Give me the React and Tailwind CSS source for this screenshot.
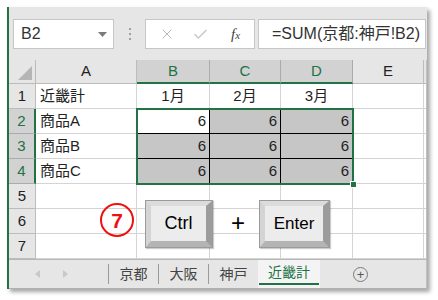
import React from 'react';
import { X, Check } from 'lucide-react';

const COLS = ['A', 'B', 'C', 'D', 'E'];
const COL_W = ['w-[101px]', 'w-[73px]', 'w-[71px]', 'w-[72px]', 'w-[71px]'];

// row data: [A, B, C, D]
const ROWS = [
  ['近畿計', '1月', '2月', '3月'],
  ['商品A', '6', '6', '6'],
  ['商品B', '6', '6', '6'],
  ['商品C', '6', '6', '6'],
  ['', '', '', ''],
  ['', '', '', ''],
  ['', '', '', ''],
];

const font = { fontFamily: '"Liberation Sans", "Noto Sans CJK JP", sans-serif' };

const Cell = ({ r, c, value }) => {
  const inSel = r >= 1 && r <= 3 && c >= 1 && c <= 3;
  const active = r === 1 && c === 1;
  let cls = 'h-[25px] shrink-0 flex items-center text-[15px] text-[#222] border-r border-b ';
  cls += COL_W[c] + ' ';
  if (inSel) {
    cls += active ? 'bg-white ' : 'bg-[#c6c6c6] ';
    cls += 'border-black ';
  } else {
    cls += 'bg-white border-[#d4d4d4] ';
  }
  if (r === 0 && c >= 1 && c <= 3) cls += 'justify-center border-b-black ';
  else if (c === 0) cls += 'pl-[4px] ';
  else cls += 'justify-end pr-[3px] ';
  if (c === 0 && r >= 1 && r <= 3) cls += 'border-r-[#d4d4d4] ';
  return <div className={cls}>{value}</div>;
};

const Key = ({ label, w, size }) => (
  <div className={`${w} h-[48px] border border-[#9a9a9a] bg-[#a8a8a8] shadow-[1px_1px_1px_rgba(0,0,0,0.2)]`}>
    <div className="w-full h-full border-t-[5px] border-l-[5px] border-r-[6px] border-b-[6px] border-t-[#dcdcdc] border-l-[#d4d4d4] border-r-[#9c9c9c] border-b-[#b4b4b4] bg-[#ececec] flex items-center justify-center">
      <span className={`${size} text-black`} style={font}>{label}</span>
    </div>
  </div>
);

export default function App() {
  return (
    <div className="w-[438px] h-[300px] bg-white pt-[7px] pl-[7px]" style={font}>
      <div className="relative w-[420px] h-[282px] bg-[#e6e6e6] border-l-2 border-[#217346] shadow-[3px_3px_4px_rgba(0,0,0,0.35)] flex flex-col">
        {/* formula bar */}
        <div className="h-[53px] flex items-start pt-[12px] pl-[4px]">
          <div className="w-[101px] h-[30px] bg-white border border-[#c6c6c6] flex items-center justify-between pl-[7px] pr-[6px]">
            <span className="text-[16px] text-[#333]">B2</span>
            <svg width="9" height="5" viewBox="0 0 9 5"><path d="M0 0h9L4.5 5z" fill="#7a7a7a" /></svg>
          </div>
          <div className="w-[31px] h-[30px] flex flex-col items-center justify-center gap-[3px]">
            <div className="w-[2px] h-[2px] bg-[#a0a0a0]" />
            <div className="w-[2px] h-[2px] bg-[#a0a0a0]" />
            <div className="w-[2px] h-[2px] bg-[#a0a0a0]" />
          </div>
          <div className="w-[110px] h-[30px] bg-white border border-[#c6c6c6] flex items-center pl-[13px]">
            <X size={16} strokeWidth={1.4} color="#b4b4b4" />
            <Check size={17} strokeWidth={2} color="#c8c8c8" className="ml-[17px]" />
            <span className="ml-[22px] text-[15px] italic text-[#444]" style={{ fontFamily: '"Liberation Serif", serif' }}>f<span className="text-[11px]">x</span></span>
          </div>
          <div className="ml-[3px] w-[168px] h-[30px] bg-white border border-[#c6c6c6] flex items-center pl-[13px]">
            <span className="text-[16px] text-[#333]">=SUM(京都:神戸!B2)</span>
          </div>
        </div>

        {/* grid */}
        <div className="relative h-[199px] flex flex-col bg-white border-r border-[#c0c0c0]">
          <div className="flex h-[24px]">
            <div className="w-[27px] shrink-0 bg-[#e6e6e6] border-r border-b border-[#bcbcbc] flex items-end justify-end p-[3px]">
              <svg width="14" height="14" viewBox="0 0 14 14"><path d="M14 0V14H0z" fill="#b5b5b5" /></svg>
            </div>
            {COLS.map((c, i) => {
              const sel = i >= 1 && i <= 3;
              return (
                <div
                  key={c}
                  className={`${COL_W[i]} shrink-0 flex items-center justify-center text-[15px] border-r ${sel ? 'bg-[#d2d2d2] border-[#ababab] border-b-2 border-b-[#217346] text-[#217346]' : 'bg-[#e6e6e6] border-[#bcbcbc] border-b text-[#222]'}`}
                >
                  {c}
                </div>
              );
            })}
            <div className="flex-1 bg-[#e6e6e6] border-b border-[#bcbcbc]" />
          </div>
          {ROWS.map((row, r) => {
            const sel = r >= 1 && r <= 3;
            return (
              <div key={r} className="flex h-[25px]">
                <div
                  className={`w-[27px] shrink-0 flex items-center justify-center text-[15px] border-b ${sel ? 'bg-[#d2d2d2] border-[#ababab] border-r-2 border-r-[#217346] text-[#217346]' : 'bg-[#e6e6e6] border-[#bcbcbc] border-r text-[#222]'}`}
                >
                  {r + 1}
                </div>
                {[...row, ''].map((v, c) => (
                  <Cell key={c} r={r} c={c} value={v} />
                ))}
                <div className="flex-1 bg-white border-b border-[#d4d4d4]" />
              </div>
            );
          })}

          {/* selection border */}
          <div className="absolute left-[127px] top-[48px] w-[218px] h-[77px] border-2 border-[#217346] pointer-events-none" />
          <div className="absolute left-[341px] top-[121px] w-[7px] h-[7px] bg-[#217346] border border-white" />

          {/* overlays */}
          <div className="absolute left-[91px] top-[143px] w-[34px] h-[34px] rounded-full border-2 border-[#ee1111] flex items-center justify-center">
            <span className="text-[21px] font-bold text-[#ee1111] leading-none">7</span>
          </div>
          <div className="absolute left-[136px] top-[140px]">
            <Key label="Ctrl" w="w-[68px]" size="text-[18px]" />
          </div>
          <div className="absolute left-[222px] top-[151px] text-[24px] text-black leading-none">+</div>
          <div className="absolute left-[250px] top-[140px]">
            <Key label="Enter" w="w-[71px]" size="text-[17px]" />
          </div>
        </div>

        {/* sheet tabs */}
        <div className="h-[30px] border-t border-[#b8b8b8] border-r border-r-[#c0c0c0] border-b border-b-[#b0b0b0] flex items-stretch text-[14px] text-[#444]">
          <div className="w-[99px] flex items-center pl-[26px] gap-[23px]">
            <svg width="5" height="8" viewBox="0 0 5 8"><path d="M5 0V8L0 4z" fill="#c8c8c8" /></svg>
            <svg width="5" height="8" viewBox="0 0 5 8"><path d="M0 0V8L5 4z" fill="#c8c8c8" /></svg>
          </div>
          {['京都', '大阪', '神戸'].map((t) => (
            <div key={t} className="flex items-center">
              <div className="w-px h-[20px] bg-[#9a9a9a]" />
              <div className="w-[49px] text-center">{t}</div>
            </div>
          ))}
          <div className="w-[62px] bg-[#f4f4f4] flex flex-col">
            <div className="flex-1 flex items-center justify-center text-[#217346] pt-[2px]">近畿計</div>
            <div className="h-[3px] bg-[#217346] mx-[1px] mb-[3px]" />
          </div>
          <div className="flex items-center pl-[33px]">
            <div className="w-[15px] h-[15px] rounded-full border border-[#7a7a7a] flex items-center justify-center text-[13px] leading-none text-[#555]">+</div>
          </div>
        </div>
      </div>
    </div>
  );
}
